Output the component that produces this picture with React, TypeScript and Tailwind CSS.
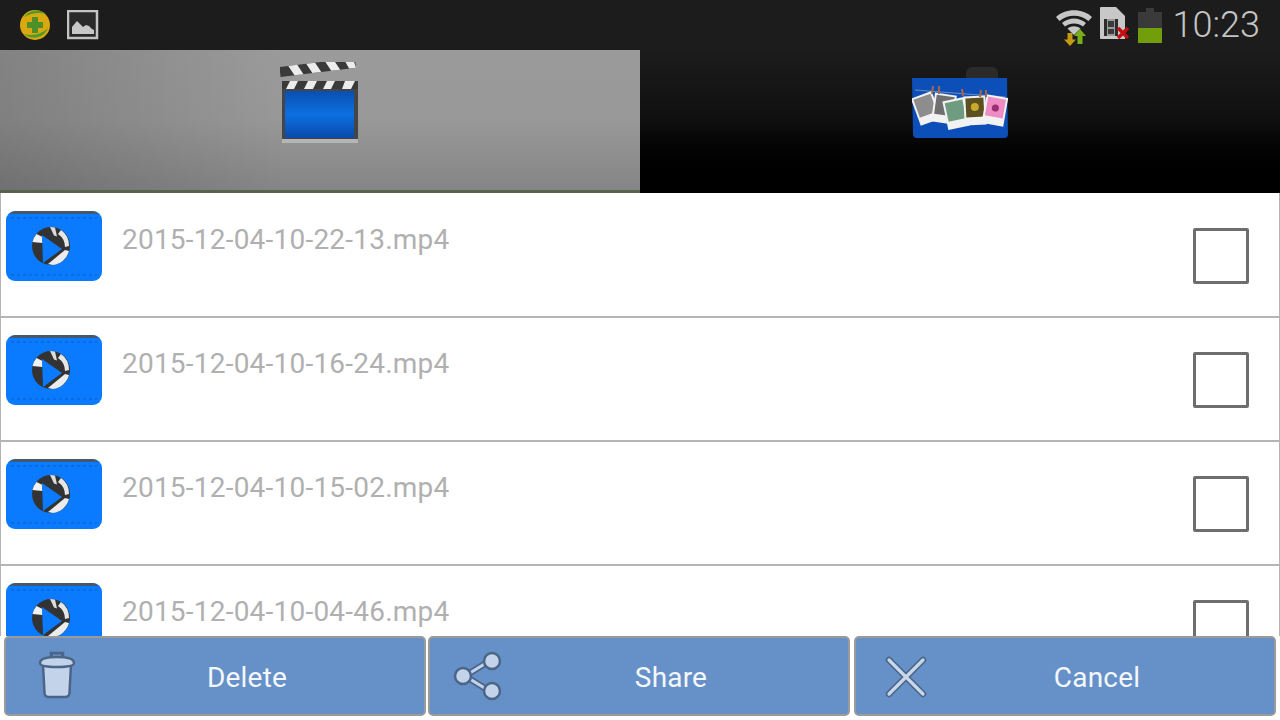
import React from 'react';

const files = [
  '2015-12-04-10-22-13.mp4',
  '2015-12-04-10-16-24.mp4',
  '2015-12-04-10-15-02.mp4',
  '2015-12-04-10-04-46.mp4',
];

function AppBadge() {
  return (
    <svg width="32" height="32" viewBox="0 0 32 32">
      <circle cx="16" cy="16" r="15" fill="#d9a90f" />
      <path d="M5 8a15 15 0 0 1 22-3c-6-2-15-1-22 3z" fill="#4f9a2c" />
      <path d="M29 19a15 15 0 0 1-24 6c7 2 17 1 24-6z" fill="#4f9a2c" />
      <path d="M13 8h6v5h5v6h-5v5h-6v-5H8v-6h5z" fill="#4f8f2a" />
    </svg>
  );
}

function PictureIcon() {
  return (
    <svg width="32" height="30" viewBox="0 0 32 30">
      <rect x="1" y="1" width="29" height="27" fill="#2a2a2a" stroke="#c4c4c4" strokeWidth="2.5" />
      <path d="M5 24v-7l5-6 4 4 2 2 3-2 3 1 3 3 2 1v4z" fill="#c8c8c8" />
    </svg>
  );
}

function WifiIcon() {
  return (
    <svg width="36" height="37" viewBox="0 0 36 37" className="mt-[4px]">
      <path d="M0 8C9-1 27-1 36 8l-3.500 4C24 5 12 5 3.500 12z" fill="#c6c6c6" />
      <path d="M6 14c7-6 17-6 24 0l-3 3.500c-5-4-13-4-18 0z" fill="#c6c6c6" />
      <path d="M11.500 19.500c4-3 9-3 13 0L18 26z" fill="#c6c6c6" />
      <path d="M11.500 24v6.500H8l6 6.500 6-6.500h-3.500V24z" fill="#c29a14" />
      <path d="M21.500 35v-8H18l6-7 6 7h-3.500v8z" fill="#7aad1a" />
    </svg>
  );
}

function SimIcon() {
  return (
    <svg width="30" height="33" viewBox="0 0 30 33" className="mb-[4px]">
      <path d="M1 0h15l9 9v23H1a1 1 0 0 1-1-1V1a1 1 0 0 1 1-1z" fill="#c8c8c8" />
      <rect x="4" y="12" width="14" height="17" fill="#2d2d2d" />
      <rect x="7" y="12" width="8" height="17" fill="#9b9b9b" />
      <rect x="8" y="14" width="6" height="6" fill="#3b3b3b" />
      <rect x="8" y="22" width="6" height="5" fill="#3b3b3b" />
      <path d="M18 21l10 10M28 21L18 31" stroke="#c40f10" strokeWidth="3.500" />
    </svg>
  );
}

function BatteryIcon() {
  return (
    <svg width="24" height="35" viewBox="0 0 24 35">
      <path d="M8 0h8v4h8v31H0V4h8z" fill="#3a3a3a" />
      <rect x="0" y="20" width="24" height="15" fill="#719e0a" />
    </svg>
  );
}

function ClapperIcon() {
  return (
    <svg width="80" height="82" viewBox="0 0 80 82" className="blur-[0.6px]">
      <defs>
        <linearGradient id="clap" x1="0" x2="0" y1="0" y2="1">
          <stop offset="0" stopColor="#0a4fb0" />
          <stop offset="0.5" stopColor="#0c70e2" />
          <stop offset="1" stopColor="#0a4aa8" />
        </linearGradient>
      </defs>
      <g transform="rotate(-7 0 10)">
        <rect x="0" y="5" width="76" height="10" fill="#3a3a3a" />
        <path d="M9 5h9l5 10h-9zM27 5h9l5 10h-9zM46 5h9l5 10h-9zM65 5h9l2 10h-7z" fill="#ececec" />
      </g>
      <rect x="2" y="19" width="76" height="8" fill="#3a3a3a" />
      <path d="M10 19h8l-4 8H6zM28 19h9l-4 8h-9zM47 19h8l-4 8h-8zM65 19h10l-4 8h-9z" fill="#ececec" />
      <rect x="2" y="27" width="76" height="50" fill="#454545" />
      <rect x="5" y="29" width="69" height="47" fill="url(#clap)" />
      <rect x="2" y="77" width="76" height="4" fill="#b5b5b5" />
    </svg>
  );
}

function Photo({ x, y, rot, fill, children }: { x: number; y: number; rot: number; fill: string; children?: React.ReactNode }) {
  return (
    <g transform={`translate(${x} ${y}) rotate(${rot})`}>
      <rect x="-11" y="-14" width="22" height="29" fill="#f2f2f2" />
      <rect x="-9" y="-12" width="18" height="19" fill={fill} />
      {children}
    </g>
  );
}

function FolderIcon() {
  return (
    <svg width="96" height="72" viewBox="0 0 96 72" className="blur-[0.6px]">
      <path d="M54 6a6 6 0 0 1 6-6h20a6 6 0 0 1 6 6v6H54z" fill="#2a2a2a" />
      <path d="M0 11h95l1 56a4 4 0 0 1-4 4H5a4 4 0 0 1-4-4z" fill="#0d4fb8" />
      <path d="M3 23l90 7" stroke="#8aa0ba" strokeWidth="0.800" />
      <Photo x={14} y={41} rot={-20} fill="#8d8d8d" />
      <Photo x={32} y={41} rot={8} fill="#6f6f6f" />
      <Photo x={44} y={46} rot={-12} fill="#6f9c80" />
      <Photo x={63} y={43} rot={-3} fill="#5c5020">
        <circle cx="0" cy="-3" r="4" fill="#c9a92a" />
      </Photo>
      <Photo x={83} y={43} rot={10} fill="#ee8cc4">
        <circle cx="0" cy="-2" r="3.500" fill="#9a2f72" />
      </Photo>
      <path d="M21 19l-1 8M27 19v8M50 22l1 7M69 23l-1 7M74 23v7" stroke="#a5674a" strokeWidth="2" />
    </svg>
  );
}

function VideoThumb() {
  return (
    <svg width="96" height="70" viewBox="0 0 96 70" className="shrink-0 blur-[0.5px]">
      <rect x="0" y="0" width="96" height="70" rx="9" fill="#0a7bff" />
      <path d="M9 0h78a9 9 0 0 1 6 3H3a9 9 0 0 1 6-3z" fill="#46586e" />
      <path d="M5 7h86M5 64h86" stroke="#0a6ce0" strokeWidth="2" strokeDasharray="3 3" />
      <circle cx="45" cy="35" r="19" fill="#333333" />
      <path d="M26.500 31a19 19 0 0 1 4-8l6 3v6z" fill="#f2f2f2" />
      <path d="M44 16a19 19 0 0 1 5 .5l2 9-3-1z" fill="#dddddd" />
      <path d="M55 19a19 19 0 0 1 8 16l-4 1a16 16 0 0 0-7-13z" fill="#e6e6e6" />
      <path d="M42 53l17-14 4 1a19 19 0 0 1-16 14z" fill="#ececec" />
      <path d="M36 24l20 14-19 14z" fill="#0a7bff" />
    </svg>
  );
}

function TrashIcon() {
  return (
    <svg width="38" height="50" viewBox="0 0 38 50" className="blur-[0.3px]">
      <path d="M13 7V3h12v4" fill="#4a6587" stroke="#4a6587" strokeWidth="2.500" />
      <rect x="15" y="4.500" width="8" height="2" fill="#6691c8" />
      <path d="M5 15l1.500 28a4 4 0 0 0 4 4h17a4 4 0 0 0 4-4L33 15z" fill="#c3d3e9" stroke="#4a6587" strokeWidth="2.500" />
      <path d="M2 13c0-4 6-6 17-6s17 2 17 6c0 3-6 4-17 4S2 16 2 13z" fill="#c3d3e9" stroke="#4a6587" strokeWidth="2.500" />
    </svg>
  );
}

function ShareIcon() {
  return (
    <svg width="50" height="50" viewBox="0 0 50 50" className="blur-[0.3px]">
      <path d="M12 25L38 9M12 25l26 16" stroke="#4a6587" strokeWidth="6.500" />
      <path d="M12 25L38 9M12 25l26 16" stroke="#c3d3e9" strokeWidth="3.200" />
      <circle cx="39" cy="10" r="8" fill="#c3d3e9" stroke="#4a6587" strokeWidth="2.500" />
      <circle cx="10" cy="25" r="8" fill="#c3d3e9" stroke="#4a6587" strokeWidth="2.500" />
      <circle cx="39" cy="40" r="8" fill="#c3d3e9" stroke="#4a6587" strokeWidth="2.500" />
    </svg>
  );
}

function CancelIcon() {
  return (
    <svg width="42" height="42" viewBox="0 0 42 42" className="blur-[0.3px]">
      <path d="M4 4l34 34M38 4L4 38" stroke="#4a6587" strokeWidth="6.500" strokeLinecap="round" />
      <path d="M4 4l34 34M38 4L4 38" stroke="#c9d7ea" strokeWidth="3.200" strokeLinecap="round" />
    </svg>
  );
}

function ActionButton({ label, icon, iconClass, className }: { label: string; icon: React.ReactNode; iconClass: string; className?: string }) {
  return (
    <button className={`relative h-20 w-[422px] shrink-0 rounded-[5px] border-2 border-[#9a9a9a] bg-[#6691c8] flex items-center justify-center text-[28px] tracking-[0.2px] text-[#f4f7fb] ${className ?? ''}`}>
      <span className={`absolute ${iconClass}`}>{icon}</span>
      <span className="ml-[64px] mt-[3px]">{label}</span>
    </button>
  );
}

export default function App() {
  return (
    <main className="w-[1280px] h-[720px] flex flex-col overflow-hidden bg-white font-['Roboto',sans-serif]">
      <header className="h-[50px] shrink-0 bg-[#1c1c1c] flex items-center justify-between pl-[19px] pr-[20px]">
        <div className="flex items-center gap-[16px]">
          <AppBadge />
          <PictureIcon />
        </div>
        <div className="flex items-center">
          <WifiIcon />
          <span className="ml-[8px]"><SimIcon /></span>
          <span className="ml-[8px]"><BatteryIcon /></span>
          <span className="ml-[11px] text-[36px] font-light text-[#c4c4c4] leading-none">10:23</span>
        </div>
      </header>

      <nav className="h-[143px] shrink-0 flex">
        <div className="w-1/2 bg-[linear-gradient(to_right,rgba(0,0,0,0.16),rgba(0,0,0,0)_45%),linear-gradient(to_bottom,#9b9b9b,#989898_50%,#858585)] border-b-[3px] border-[#59624f] flex justify-center pt-[12px]">
          <ClapperIcon />
        </div>
        <div className="w-1/2 bg-gradient-to-b from-[#1c1c1c] via-[#0f0f0f] to-[#000000] flex justify-center pt-[17px]">
          <FolderIcon />
        </div>
      </nav>

      <ul className="flex-1 min-h-0 overflow-hidden border-x border-[#b4b4b4] pt-px">
        {files.map((name) => (
          <li key={name} className="h-[124px] border-b-2 border-[#b4b4b4] flex items-start pl-[5px] pr-[30px]">
            <div className="mt-[17px]"><VideoThumb /></div>
            <span className="ml-[20px] mt-[28px] flex-1 text-[28px] tracking-[0.22px] leading-9 text-[#b0b0b0]">{name}</span>
            <span className="mt-[34px] w-14 h-14 rounded-[2px] border-[3px] border-[#6e6e6e]" />
          </li>
        ))}
      </ul>

      <footer className="h-[84px] shrink-0 flex gap-[2px] pl-1">
        <ActionButton label="Delete" icon={<TrashIcon />} iconClass="left-[32px] top-[12px]" />
        <ActionButton label="Share" icon={<ShareIcon />} iconClass="left-[23px] top-[13px]" />
        <ActionButton label="Cancel" icon={<CancelIcon />} iconClass="left-[29px] top-[18px]" className="ml-[2px]" />
      </footer>
    </main>
  );
}
